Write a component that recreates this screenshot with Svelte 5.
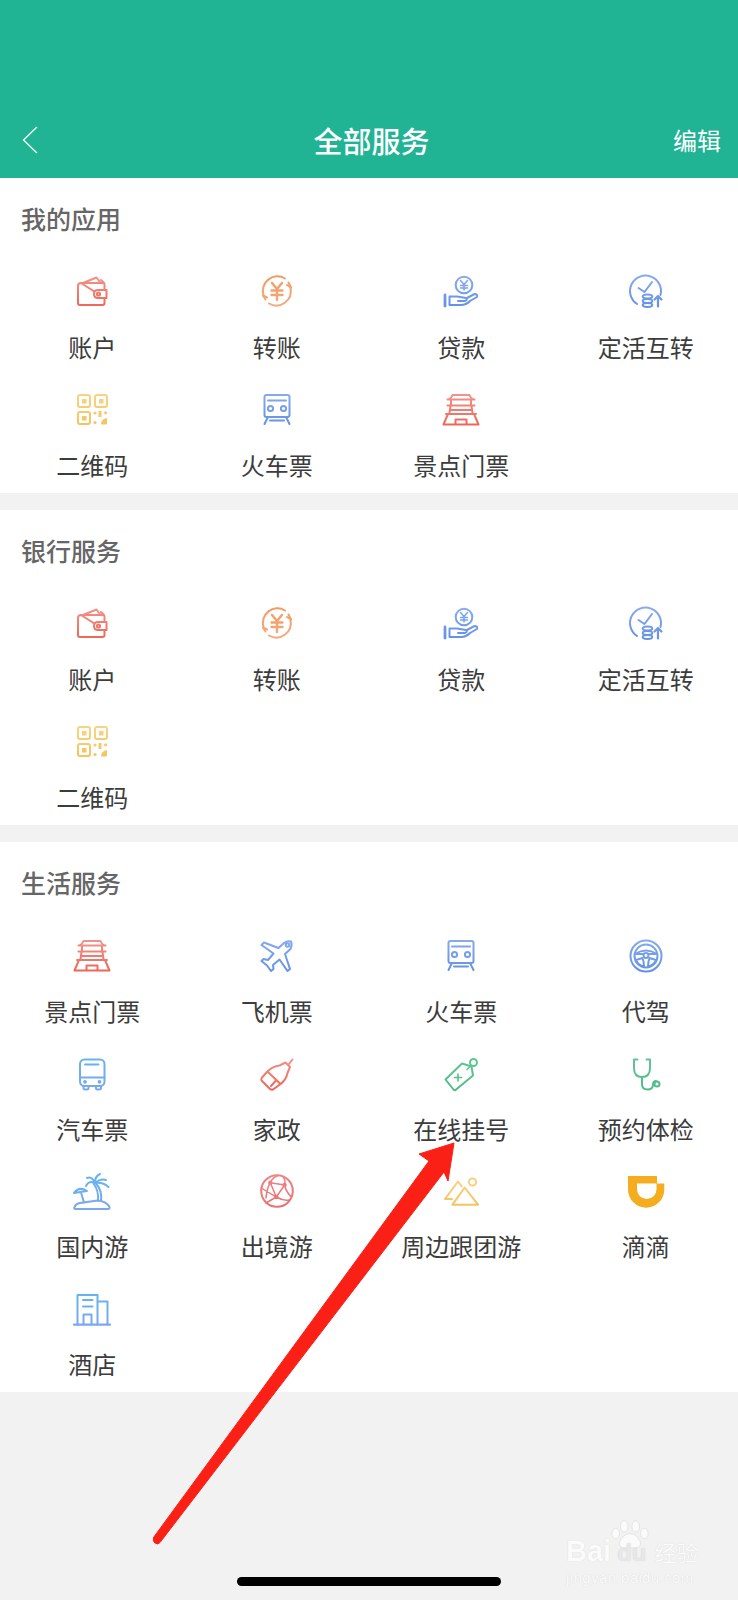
<script>
  const mine = [
    ['账户', 'wallet', 'coral'], ['转账', 'yuan', 'orange'], ['贷款', 'loan', 'blue'], ['定活互转', 'clock', 'blue'],
    ['二维码', 'qr', 'yellow'], ['火车票', 'train', 'blue'], ['景点门票', 'gate', 'coral']
  ];
  const bank = [
    ['账户', 'wallet', 'coral'], ['转账', 'yuan', 'orange'], ['贷款', 'loan', 'blue'], ['定活互转', 'clock', 'blue'],
    ['二维码', 'qr', 'yellow']
  ];
  const life = [
    ['景点门票', 'gate', 'coral'], ['飞机票', 'plane', 'blue'], ['火车票', 'train', 'blue'], ['代驾', 'wheel', 'blue'],
    ['汽车票', 'bus', 'sky'], ['家政', 'broom', 'coral'], ['在线挂号', 'tag', 'green'], ['预约体检', 'scope', 'green'],
    ['国内游', 'island', 'sky'], ['出境游', 'globe', 'rose'], ['周边跟团游', 'hills', 'yellow'], ['滴滴', 'didi', 'didi'],
    ['酒店', 'hotel', 'sky']
  ];
  const sections = [
    { title: '我的应用', items: mine },
    { title: '银行服务', items: bank },
    { title: '生活服务', items: life }
  ];
  const ramps = [
    ['coral', '#f3938a', '#ec6557'],
    ['rose', '#ee8585', '#e96f72'],
    ['orange', '#f29b62', '#f5ab80'],
    ['blue', '#86aaec', '#6390e6'],
    ['sky', '#65b4ee', '#7aa8ec'],
    ['yellow', '#f7d486', '#f5c25c'],
    ['green', '#62c594', '#52bb88']
  ];
</script>

{#snippet glyph(name, tone)}
  {@const paint = tone === 'didi' ? '#f5ac1f' : `url(#g-${tone})`}
  <svg class="icon" viewBox="0 0 48 48" fill="none" stroke={paint} stroke-width="2" stroke-linecap="round" stroke-linejoin="round">
    {#if name === 'wallet'}
      <path d="M13 15 H35 Q36.5 15 36.5 17 V21.5 M36.5 30 V35 Q36.5 37 34.5 37 H12 Q10 37 10 35 V18 Q10 15 13 15 Z" />
      <path d="M15 15 L28.5 9.5 L32.5 15 M33 12 L36 15" />
      <path d="M30 22 H38.5 V30 H30 Q26 30 26 26 Q26 22 30 22 Z" fill="#fff" />
      <circle cx="30.5" cy="26" r="1.6" />
    {:else if name === 'yuan'}
      <path d="M10.5 27 A14.5 14.5 0 0 1 32 10.5 M35.5 14.5 L38 19.5 M37.5 20 A14.5 14.5 0 0 1 16 35.5 M12.5 31.5 L10 27.5" />
      <path d="M38 19.5 L34 17 M10 27.5 L14 29.5" />
      <path d="M19 15 L24 21 L29 15 M24 21 V32 M18.5 22.5 H29.5 M18.5 27 H29.5" stroke-width="2.4" />
    {:else if name === 'loan'}
      <circle cx="27" cy="17" r="8.3" />
      <path d="M23.5 12.5 L27 16.5 L30.5 12.5 M27 16.5 V22 M23.5 17.5 H30.5 M23.5 20 H30.5" stroke-width="1.5" />
      <path d="M8 27 V38" stroke-width="2.8" />
      <path d="M12.5 28.5 H20 L29 30 Q31 32 28 33 H21 M12.5 28.5 V37 H24 Q29 37 33 33 L40 29 Q41 26 37.5 26 L30 30" />
    {:else if name === 'clock'}
      <path d="M15 36 A15.5 15.5 0 1 1 38.5 27" />
      <path d="M16.5 20 L22.5 24 L30 14" />
      <ellipse cx="25.5" cy="28.5" rx="4.8" ry="1.9" />
      <ellipse cx="25.5" cy="33" rx="4.8" ry="1.9" />
      <ellipse cx="25.5" cy="37" rx="4.8" ry="1.9" />
      <path d="M36 38.5 V28 M32.5 31.5 L36 28 L39.5 31.5" stroke-width="2.2" />
    {:else if name === 'qr'}
      <rect x="10" y="9" width="12" height="12" rx="2" /><rect x="27" y="9" width="12" height="12" rx="2" />
      <rect x="10" y="26" width="12" height="12" rx="2" />
      <g fill={paint} stroke="none">
        <rect x="14" y="13" width="4.5" height="4.5" /><rect x="31" y="13" width="4.5" height="4.5" /><rect x="14" y="30" width="4.5" height="4.5" />
        <circle cx="27" cy="27" r="1.6" /><circle cx="37.6" cy="26.8" r="1.6" /><circle cx="27" cy="36.5" r="1.6" />
        <path d="M30.5 25 H33.5 V31 H30.5 Z M33 38.5 Q33 33 39 32 V37 Q39 38.5 37.5 38.5 Z" />
      </g>
    {:else if name === 'train'}
      <rect x="11.5" y="9" width="25" height="22" rx="2" />
      <path d="M15 14.5 H33" />
      <circle cx="17.5" cy="22.5" r="2.6" /><circle cx="30.5" cy="22.5" r="2.6" />
      <path d="M15 31 L11.5 38 M33 31 L36.5 38 M17 34.5 H31" />
    {:else if name === 'gate'}
      <path d="M10.5 13.5 Q14 13 15.5 9 H32.5 Q34 13 37.5 13.5 Z" />
      <path d="M14 14 V19 M34 14 V19 M10.5 19.5 H37.5" />
      <path d="M13.5 20 L12.5 27 M34.5 20 L35.5 27 M14 24 H34 M9 28 H39" />
      <path d="M11 28 L6.5 38.5 H41.5 L37 28 M18.5 38.5 V33.5 H29.5 V38.5" />
    {:else if name === 'plane'}
      <path d="M38 9.5 Q34 8.5 31 11 L25.5 16 L11 10.5 L8.5 13 L20.5 21.5 L15 28 L10.5 27 L8.5 29 L14 33.5 L18 39 L20.5 37 L20 33 L26.5 27.5 L34.5 39 L37 37 L32 22 L37.5 17 Q39.5 13 38 9.5 Z" />
      <circle cx="34.5" cy="13" r="1.8" />
    {:else if name === 'wheel'}
      <circle cx="24" cy="24" r="15.5" />
      <circle cx="24" cy="24" r="11.5" />
      <circle cx="24" cy="23.5" r="2.4" />
      <path d="M13 22 Q24 15 35 22 L27 22 M13 22 L21 22 M14 28 L20.5 26 Q22 30 22 34.5 Q16 33 14 28 Z M34 28 L27.5 26 Q26 30 26 34.5 Q32 33 34 28 Z" />
    {:else if name === 'bus'}
      <rect x="12" y="9.5" width="24.5" height="26.5" rx="4.5" />
      <path d="M12 27.5 H36.5 M17 14.5 H30.5" />
      <path d="M15.5 36 V38 Q15.5 39.5 17.5 39.5 H19 Q20.5 39.5 20.5 38 V36 M28 36 V38 Q28 39.5 29.5 39.5 H31 Q33 39.5 33 38 V36" />
      <circle cx="17" cy="31.8" r=".9" /><circle cx="31.5" cy="31.8" r=".9" />
    {:else if name === 'broom'}
      <path d="M32.5 12.5 L37 17 L34.5 23 Q33 30 27.5 34 L20 39.5 Q18.5 40 17 39 L8.5 30.5 Q8 29 9 27.5 L14 22 Q19 16.5 26.5 15.5 Z" />
      <path d="M14.5 21.5 L27.5 34 M18 36 L23 30.5 M36 14 L39.5 9.5" />
    {:else if name === 'tag'}
      <path d="M8.5 29.5 L25 13.5 L34.5 16.5 L36 25.5 L18.5 40 Q17.5 40.5 16.5 39.5 Z" />
      <circle cx="36.5" cy="12.5" r="3.5" />
      <path d="M30 19.5 L34 15.5 M21 24 V31 M17.5 27.5 H24.5" stroke-width="1.6" />
    {:else if name === 'scope'}
      <path d="M15.5 9.5 H12 V18 Q12 27 20 27 Q28 27 28 18 V9.5 H24.5" />
      <path d="M20 27 V34 Q20 39.5 25.5 39.5 Q31 39.5 31 34.5 Q31 31 34 31" />
      <circle cx="35" cy="34" r="2.5" />
    {:else if name === 'island'}
      <path d="M7.5 42 Q5.5 42 6.5 40 Q8 36.5 12 36 L29.5 33.5 Q38 34 41.5 40 Q42 42 40 42 Z" />
      <path d="M30 33.5 Q31 24 25.5 16.5 M33 34 Q34.5 24 28 16.5" />
      <path d="M27 16 Q21 13 18 19 M27 16 Q24 9 19 11 M27 16 Q27 9 32 7 M27 16 Q33 11 38 13 M27 16 Q35 15 40.5 20" />
      <path d="M6 26 Q11 19 19 24 Z M13 25.5 L16 35.5" />
    {:else if name === 'globe'}
      <circle cx="24" cy="24" r="15.8" />
      <path d="M17.3 15.7 L31.6 18 M17.3 15.7 L23.3 30 M23.3 30 L31.6 18 M17.3 15.7 Q14 21 13 31 M17.3 15.7 Q20 10 25 8.5 M31.6 18 Q33 13 30 10 M31.6 18 Q33 25 38.5 30 M23.3 30 Q30 34 36 33 M23.3 30 L13 36 M8.5 21 Q13 24 23.3 30" stroke-width="1.5" />
      <g fill={paint} stroke="none"><circle cx="17.3" cy="15.7" r="2.2" /><circle cx="31.6" cy="18" r="2.2" /><circle cx="23.3" cy="30" r="2.2" /></g>
    {:else if name === 'hills'}
      <path d="M15.5 37.7 L27.7 20.5 L41 37.7 Z" />
      <path d="M15 32 H8 L21 14.5 L24.8 19.5" />
      <circle cx="35.5" cy="15" r="3.6" />
    {:else if name === 'didi'}
      <path fill={paint} stroke="none" fill-rule="evenodd" d="M6 9 H35 V16.5 H42.3 V22.5 A18.15 18.2 0 0 1 6 22.5 Z M15 16.5 H34.5 V22.5 A9.75 9.5 0 0 1 15 22.5 Z" />
    {:else if name === 'hotel'}
      <path d="M6 39.7 H42" stroke-width="2.2" />
      <path d="M9.5 39.5 V10 H29.5 V39.5 M29.5 16.5 H39.5 V39.5" />
      <path d="M15 15 H24.5 M15 21.5 H24.5 M15.5 39.5 V29.5 H23.5 V39.5" />
    {/if}
  </svg>
{/snippet}

<svg class="defs" aria-hidden="true">
  <defs>
    {#each ramps as [id, from, to]}
      <linearGradient id={`g-${id}`} gradientUnits="userSpaceOnUse" x1="0" y1="8" x2="0" y2="40">
        <stop offset="0" stop-color={from} /><stop offset="1" stop-color={to} />
      </linearGradient>
    {/each}
  </defs>
</svg>

<div class="page">
  <header class="top">
    <svg class="back" viewBox="0 0 16 28" fill="none" stroke="#fff" stroke-width="1.3"><path d="M15 1 L1.5 14 L15 27" /></svg>
    <h1>全部服务</h1>
    <span class="edit">编辑</span>
  </header>

  {#each sections as s}
    <section>
      <h2>{s.title}</h2>
      <div class="grid">
        {#each s.items as [label, icon, tone]}
          <div class="cell">
            {@render glyph(icon, tone)}
            <span>{label}</span>
          </div>
        {/each}
      </div>
    </section>
  {/each}

  <div class="home"></div>

  <div class="mark">
    <svg class="paw" viewBox="0 0 44 30" fill="#fbfbfb" stroke="#dedede" stroke-width=".8">
      <ellipse cx="7" cy="14" rx="4" ry="5.5" /><ellipse cx="16" cy="6.5" rx="4" ry="6" /><ellipse cx="28" cy="6.5" rx="4" ry="6" /><ellipse cx="37" cy="14" rx="4" ry="5.5" />
      <path d="M22 14 Q29 14 33 23 Q34 29 27 29 H17 Q10 29 11 23 Q15 14 22 14 Z" />
    </svg>
    <div class="logo"><b>Bai</b><b class="du">du</b><span>经验</span></div>
    <div class="url">jingyan.baidu.com</div>
  </div>

  <svg class="arrow" viewBox="0 0 738 1600" aria-hidden="true">
    <path fill="#fb2016" stroke="#fb2016" stroke-width="1" stroke-linejoin="round" d="M454 1143 L419 1154 L429 1161 L153.5 1537.5 Q152.5 1541 155 1543 Q158 1545 160 1542.5 L444 1172 L448 1181 Z" />
  </svg>
</div>

<style>
  :global(body) { margin: 0; background: #f2f2f2; }
  .defs { position: absolute; width: 0; height: 0; }
  .page {
    position: relative;
    width: 738px;
    height: 1600px;
    overflow: hidden;
    background: #f2f2f2;
    font-family: "Noto Sans CJK SC", "Liberation Sans", sans-serif;
  }
  .top {
    box-sizing: border-box;
    height: 178px;
    padding: 124px 17px 0 22px;
    background: #20b394;
    color: #fff;
    display: grid;
    grid-template-columns: 1fr auto 1fr;
    align-items: start;
  }
  .back { width: 16px; height: 28px; margin-top: 2px; }
  h1 { margin: 0; font-size: 29px; font-weight: 500; line-height: 32px; }
  .edit { justify-self: end; font-size: 24px; line-height: 32px; font-weight: 400; }
  section {
    box-sizing: border-box;
    background: #fff;
    padding: 22px 0 12.5px;
    margin-bottom: 17px;
  }
  h2 {
    margin: 0 0 32px 21px;
    font-size: 25px;
    line-height: 36px;
    font-weight: 500;
    color: #666;
  }
  .grid {
    display: grid;
    grid-template-columns: repeat(4, 1fr);
    grid-auto-rows: 95px;
    row-gap: 22.5px;
  }
  .cell {
    display: flex;
    flex-direction: column;
    align-items: center;
    gap: 15px;
    font-size: 24px;
    line-height: 32px;
    color: #3c3c3c;
    white-space: nowrap;
  }
  .icon { width: 48px; height: 48px; flex: none; }
  .home {
    position: absolute;
    left: 237px;
    top: 1577px;
    width: 264px;
    height: 9px;
    border-radius: 4.5px;
    background: #000;
  }
  .mark {
    position: absolute;
    left: 566px;
    top: 1520px;
    width: 134px;
    color: #fbfbfb;
    text-shadow: 0 0 1px #cfcfcf;
    font-family: "Liberation Sans", "Noto Sans CJK SC", sans-serif;
  }
  .paw { position: absolute; left: 43px; top: 0; width: 42px; height: 29px; }
  .logo { position: relative; display: flex; align-items: baseline; font-size: 29px; line-height: 32px; margin-top: 15px; }
  .logo b { font-weight: 700; }
  .logo .du { font-size: 24px; margin-left: 6px; color: #e8e8e8; }
  .logo span { font-size: 22px; margin-left: 8px; font-family: "Noto Sans CJK SC", sans-serif; }
  .url { font-size: 15px; line-height: 16px; margin-top: 1px; letter-spacing: .4px; }
  .arrow { position: absolute; inset: 0; width: 738px; height: 1600px; pointer-events: none; }
</style>
